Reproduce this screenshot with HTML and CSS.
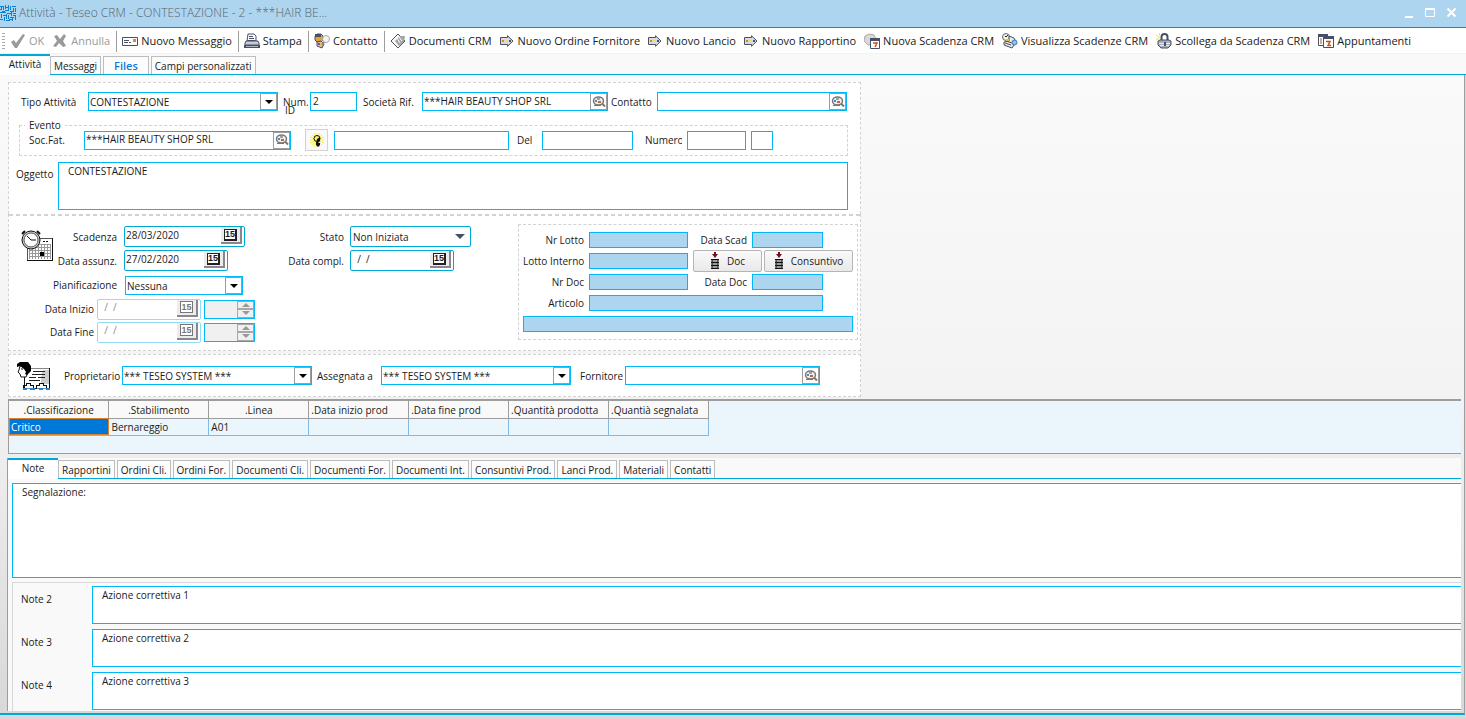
FILE: index.html
```html
<!DOCTYPE html>
<html lang="it">
<head>
<meta charset="utf-8">
<title>Attività - Teseo CRM</title>
<link rel="stylesheet" href="styles.css">
</head>
<body>
<svg class="defs" aria-hidden="true">
  <symbol id="i-ok" viewBox="0 0 16 16"><path d="M1 9l3-2 2 3 7-9 2 1-8 13H5z" fill="#9a9a9a"/></symbol>
  <symbol id="i-no" viewBox="0 0 16 16"><path d="M2 3l3-1 3 4 4-5 2 2-3 5 3 5-3 1-4-4-3 4-3-1 4-5z" fill="#9a9a9a"/></symbol>
  <symbol id="i-mail" viewBox="0 0 16 16"><path d="M.5 4.500h15v8H.5z" fill="#fff" stroke="#465066"/><path d="M2 7.500h5M2 9.500h4M7 9.500h2" stroke="#465066"/><path d="M11 6h3v3h-3z" fill="#e58a1c"/></symbol>
  <symbol id="i-print" viewBox="0 0 16 16"><path d="M4 1h6l2 2v5H3z" fill="#fff" stroke="#465066"/><path d="M5 3.500h4M5 5.500h5M4 7.500h7" stroke="#465066"/><path d="M2 8h12l1 2v2H1v-2z" fill="#c9ccd4" stroke="#465066"/><path d="M0 12h16v3H0z" fill="#465066"/><path d="M2 13.500h12" stroke="#aeb4c0"/></symbol>
  <symbol id="i-person" viewBox="0 0 16 16"><path d="M1 3l2-2h4l2 2v4l-2 2H3L1 7z" fill="#e9a23a" stroke="#465066"/><path d="M1 1h6v3H1z" fill="#465066"/><path d="M3 9l4-1 3 3-2 4-5-2z" fill="#e8c07a" stroke="#465066"/><circle cx="12" cy="6" r="3.500" fill="#f4f4f4" stroke="#aaa"/><path d="M10 9l-2 3" stroke="#888" stroke-width="2"/><path d="M4 10h2v2H4z" fill="#7d4fa8"/></symbol>
  <symbol id="i-doc" viewBox="0 0 16 16"><path d="M1 8l7-7 7 7-7 7z" fill="#f6f6f6" stroke="#555"/><path d="M5 8l5-5 5 0-1 6-5 4z" fill="#a5a5a5"/><path d="M7 5l3 5M9 4l3 4" stroke="#fff"/><path d="M2 9l6 6 7-7" fill="none" stroke="#555"/></symbol>
  <symbol id="i-arrow" viewBox="0 0 14 12"><path d="M.5 2.500h7V.7L13 6l-5.500 5.300V9.500h-7z" fill="#d9dbe0" stroke="#465066"/><path d="M2 5h2v2H2z" fill="#e5801c"/><path d="M5 5h3v2H5z" fill="#f4e43c"/><path d="M9 5h2v2H9z" fill="#465066"/></symbol>
  <symbol id="i-cal" viewBox="0 0 16 16"><path d="M1 3l4-2 5 1 2 4-2 5-6 1-4-4z" fill="#d9d9d9" stroke="#aaa"/><path d="M6.500 5.500h9v10h-9z" fill="#fff" stroke="#465066"/><path d="M6 5h10v3H6z" fill="#465066"/><path d="M9 10h4l-2 4" fill="none" stroke="#c5501c" stroke-width="1.500"/></symbol>
  <symbol id="i-view" viewBox="0 0 16 16"><circle cx="4" cy="4" r="3.500" fill="#f2f2f2" stroke="#666"/><path d="M3 3l1 1 2-2" fill="none" stroke="#222"/><path d="M7 3l5 2 2 4-4 6-8-3V9l5-1z" fill="#e8e8e8" stroke="#465066"/><path d="M3 10l6 2M4 8l6 2" stroke="#465066"/><circle cx="12.500" cy="9.500" r="2.500" fill="#8fc1ee" stroke="#3c78b8"/><path d="M4 6h3v2H4z" fill="#e8c33a"/></symbol>
  <symbol id="i-lock" viewBox="0 0 16 16"><path d="M5.500 8V4a3 3 0 0 1 6 0v4" fill="none" stroke="#465066" stroke-width="2"/><path d="M2 8l2-1h9l2 1v4l-3 3H5l-3-3z" fill="#a9aebb" stroke="#465066"/><path d="M3 10.500h11M4 12.500h9" stroke="#e6e8ee"/><path d="M8 9h2v4H8z" fill="#465066"/><path d="M0 2l4 3M0 6h3M3 0l1 3" stroke="#f1e03a"/></symbol>
  <symbol id="i-app" viewBox="0 0 16 16"><path d="M.5 1.500h9v11h-9z" fill="#fff" stroke="#465066"/><path d="M0 1h10v3H0z" fill="#465066"/><path d="M2 6h2M2 8h2M2 10h2" stroke="#c5501c"/><path d="M5.500 3.500h10v11h-10z" fill="#fff" stroke="#465066"/><path d="M5 3h11v3H5z" fill="#465066"/><path d="M8 8.500h4l-2 4h3" fill="none" stroke="#c5501c" stroke-width="1.500"/></symbol>
  <symbol id="i-look" viewBox="0 0 14 14"><ellipse cx="6.500" cy="6" rx="5" ry="4" fill="#eee" stroke="#777" stroke-width="1.500"/><path d="M2 10.500h7" stroke="#777"/><path d="M10 8.500l3 3" stroke="#777" stroke-width="2"/><path d="M3 5h2v2H3z" fill="#3a8fe0"/><path d="M6 6h3v2H6z" fill="#c5662c"/><path d="M5 4h3" stroke="#555"/></symbol>
  <symbol id="i-down" viewBox="0 0 8 4"><path d="M0 0h8L4 4z" fill="currentColor"/></symbol>
  <symbol id="i-stack" viewBox="0 0 10 18"><path d="M5 0v3" stroke="#7a0c1c" stroke-width="2"/><path d="M2 2h6L5 6z" fill="#7a0c1c"/><path d="M2 7.500h6v9H2z" fill="#999" stroke="#111"/><path d="M1 7.500h8M1 10.500h8M1 13.500h8M1 16.500h8" stroke="#111"/></symbol>
</svg>

<div class="window">
  <header class="titlebar">
    <svg class="app-icon" viewBox="0 0 16 16" shape-rendering="crispEdges" fill="none" stroke="#0a7fd6"><path d="M0 1.500h4M3.500 1v4M6 2.500h3M8.500 0v6M0 4.500h2M5 5.500h3M10.500 1v4M12 1.500h4M13.500 3v3M15.500 3v4M0 7.500h6M7 8.500h4M11.500 6v5M13 8.500h3M1.500 9v4M3 10.500h4M8.500 10v4M10 12.500h4M4.500 12v4M0 14.500h3M6 15.500h4M12.500 13v3M15.500 10v5M6.500 12v2M1.500 2v3M5.500 0v4M10 6.500h4M2 6.500h3M6.500 9v3M13 10.500h2M9 14.500h3"/></svg>
    <h1>Attività - Teseo CRM - CONTESTAZIONE - 2 - ***HAIR BE...</h1>
    <div class="win-buttons">
      <button type="button" aria-label="Riduci"><svg viewBox="0 0 12 12"><path d="M3 10h8" stroke="#fff" stroke-width="2"/></svg></button>
      <button type="button" aria-label="Ingrandisci"><svg viewBox="0 0 12 12" fill="none" stroke="#fff"><path d="M1.500 1.500h9v8h-9z"/><path d="M1 2h10" stroke-width="2"/></svg></button>
      <button type="button" aria-label="Chiudi"><svg viewBox="0 0 12 12"><path d="M1.500 1.500l8 8M9.500 1.500l-8 8" stroke="#fff" stroke-width="2"/></svg></button>
    </div>
  </header>

  <nav class="toolbar">
    <span class="grip"></span>
    <button type="button" disabled><svg><use href="#i-ok"/></svg>OK</button>
    <button type="button" disabled><svg><use href="#i-no"/></svg>Annulla</button>
    <span class="sep"></span>
    <button type="button"><svg><use href="#i-mail"/></svg>Nuovo Messaggio</button>
    <span class="sep"></span>
    <button type="button"><svg><use href="#i-print"/></svg>Stampa</button>
    <span class="sep"></span>
    <button type="button"><svg><use href="#i-person"/></svg>Contatto</button>
    <span class="sep"></span>
    <button type="button"><svg><use href="#i-doc"/></svg>Documenti CRM</button>
    <button type="button"><svg class="arrow"><use href="#i-arrow"/></svg>Nuovo Ordine Fornitore</button>
    <button type="button"><svg class="arrow"><use href="#i-arrow"/></svg>Nuovo Lancio</button>
    <button type="button"><svg class="arrow"><use href="#i-arrow"/></svg>Nuovo Rapportino</button>
    <button type="button"><svg><use href="#i-cal"/></svg>Nuova Scadenza CRM</button>
    <button type="button"><svg><use href="#i-view"/></svg>Visualizza Scadenze CRM</button>
    <button type="button"><svg><use href="#i-lock"/></svg>Scollega da Scadenza CRM</button>
    <button type="button"><svg><use href="#i-app"/></svg>Appuntamenti</button>
  </nav>

  <nav class="tabs main-tabs">
    <button type="button" class="tab active">Attività</button>
    <button type="button" class="tab">Messaggi</button>
    <button type="button" class="tab files">Files</button>
    <button type="button" class="tab">Campi personalizzati</button>
  </nav>

  <main class="page">
    <form class="form">
      <section class="block general">
        <div class="row">
          <label class="l-tipo" for="tipo">Tipo Attività</label>
          <div class="combo"><select id="tipo"><option>CONTESTAZIONE</option></select><span class="drop"><svg><use href="#i-down"/></svg></span></div>
          <label class="l-num" for="num">Num.<span class="id">ID</span></label>
          <input class="w47" id="num" value="2">
          <label class="l-soc" for="soc">Società Rif.</label>
          <div class="lookup w186"><input id="soc" value="***HAIR BEAUTY SHOP SRL"><button type="button" aria-label="Cerca società"><svg><use href="#i-look"/></svg></button></div>
          <label class="l-con" for="con">Contatto</label>
          <div class="lookup w190"><input id="con"><button type="button" aria-label="Cerca contatto"><svg><use href="#i-look"/></svg></button></div>
        </div>
        <fieldset class="evento">
          <legend>Evento</legend>
          <div class="evento-row">
            <label class="l-fat" for="fat">Soc.Fat.</label>
            <div class="lookup w207"><input id="fat" value="***HAIR BEAUTY SHOP SRL"><button type="button" aria-label="Cerca fatturazione"><svg><use href="#i-look"/></svg></button></div>
            <button type="button" class="bulb" aria-label="Suggerimento"><svg viewBox="0 0 16 16"><path d="M8 1v14M1 8h14M3 3l10 10M13 3L3 13M5 1l6 14M1 5l14 6M11 1L5 15M15 5L1 11" stroke="#f5ee3c"/><circle cx="8" cy="6.500" r="3" fill="#fff45a" stroke="#111"/><path d="M8 7l3-2v4l-2 2H7z" fill="#111"/><path d="M7 11h4v2l-2 2-2-2z" fill="#111"/></svg></button>
            <input class="w175" aria-label="Evento">
            <label class="l-del" for="del">Del</label>
            <input class="w91" id="del">
            <label class="l-numero" for="numero"><span>Numero</span></label>
            <input class="w59" id="numero">
            <input class="w22" aria-label="Serie">
          </div>
        </fieldset>
        <div class="oggetto">
          <label for="ogg">Oggetto</label>
          <textarea id="ogg">CONTESTAZIONE</textarea>
        </div>
      </section>

      <section class="block planning">
        <svg class="clock" viewBox="0 0 32 32" shape-rendering="crispEdges"><path d="M6.500 8.500h25v22h-25z" fill="#fff" stroke="#555"/><path d="M8 14.500h22M8 17.500h22M8 20.500h22M8 23.500h22M8 26.500h22M8.500 14v15M11.500 14v15M14.500 14v15M17.500 14v15M20.500 14v15M23.500 14v15M26.500 14v15M29.500 14v15" stroke="#999"/><path d="M6 30.500h26M31.500 8v23" stroke="#111"/><path d="M19 22h4v4h-4z" fill="#000"/><path d="M22 11.500h6" stroke="#111" stroke-dasharray="2 1"/><g shape-rendering="auto"><circle cx="10" cy="10" r="9" fill="#ccc" stroke="#111"/><circle cx="10" cy="10" r="7" fill="#fff" stroke="#555"/><path d="M6 6l4 4h5" fill="none" stroke="#111"/><path d="M1 4l3-3M16 1l3 3" stroke="#111" stroke-width="2"/></g></svg>

        <div class="plan-left">
          <label for="scad">Scadenza</label>
          <div class="date wide"><input id="scad" value="28/03/2020"><button type="button" aria-label="Calendario"><span>15</span></button></div>
          <label for="ass">Data assunz.</label>
          <div class="date"><input id="ass" value="27/02/2020"><button type="button" aria-label="Calendario"><span>15</span></button></div>
          <label for="pian">Pianificazione</label>
          <div class="combo w118"><select id="pian"><option>Nessuna</option></select><span class="drop"><svg><use href="#i-down"/></svg></span></div>
          <div class="off-row">
            <label for="din">Data Inizio</label>
            <div class="date off"><input id="din" value="  /  /" disabled><button type="button" disabled aria-label="Calendario"><span>15</span></button></div>
            <div class="spin"><input aria-label="Ora inizio" disabled><span class="arrows"><button type="button" disabled aria-label="Su"><svg class="up"><use href="#i-down"/></svg></button><button type="button" disabled aria-label="Giù"><svg><use href="#i-down"/></svg></button></span></div>
          </div>
          <div class="off-row">
            <label for="dfi">Data Fine</label>
            <div class="date off"><input id="dfi" value="  /  /" disabled><button type="button" disabled aria-label="Calendario"><span>15</span></button></div>
            <div class="spin"><input aria-label="Ora fine" disabled><span class="arrows"><button type="button" disabled aria-label="Su"><svg class="up"><use href="#i-down"/></svg></button><button type="button" disabled aria-label="Giù"><svg><use href="#i-down"/></svg></button></span></div>
          </div>
        </div>

        <div class="plan-mid">
          <label for="stato">Stato</label>
          <div class="combo flat"><select id="stato"><option>Non Iniziata</option></select><span class="drop"><svg><use href="#i-down"/></svg></span></div>
          <label for="compl">Data compl.</label>
          <div class="date"><input id="compl" value="  /  /"><button type="button" aria-label="Calendario"><span>15</span></button></div>
        </div>

        <div class="lotto">
          <label class="first" for="nl">Nr Lotto</label><input id="nl" readonly>
          <label for="ds">Data Scad</label><input id="ds" readonly>
          <label class="first" for="li">Lotto Interno</label><input id="li" readonly>
          <div class="lotto-buttons">
            <button type="button"><svg><use href="#i-stack"/></svg>Doc</button>
            <button type="button" class="wide"><svg><use href="#i-stack"/></svg>Consuntivo</button>
          </div>
          <label class="first" for="nd">Nr Doc</label><input id="nd" readonly>
          <label for="dd">Data Doc</label><input id="dd" readonly>
          <label class="first" for="art">Articolo</label><input id="art" class="long" readonly>
          <input class="full" aria-label="Descrizione articolo" readonly>
        </div>
      </section>

      <section class="block owner">
        <svg class="card" viewBox="0 0 34 28" shape-rendering="crispEdges"><path d="M7.500 6.500h25v20h-25z" fill="#fff" stroke="#888"/><path d="M26 8h6v14h-8v-6z" fill="#ccc"/><path d="M32.500 6v21M7.500 14v12" stroke="#111"/><path d="M16 9.500h12M15 12.500h13M12 15.500h7M21 15.500h7M12 18.500h11" stroke="#222"/><path d="M6 26v-3h3v-2h4v2h3v3h3v-3h3v-2h4v2h3v3h4" fill="none" stroke="#111"/><path d="M6 26.500h4M13 26.500h5M22 26.500h4M29 26.500h4" stroke="#1c86e0" stroke-width="2"/><g shape-rendering="auto"><path d="M3 4h6l3 4-3 7H4l-1-3-2-2 1-2z" fill="#fff" stroke="#111"/><path d="M0 2l3-2h8l3 4v5l-4 4-2-1 1-2-2-3-4-3-3 1z" fill="#000"/><path d="M4 7h2" stroke="#111"/></g></svg>
        <label class="l-prop" for="prop">Proprietario</label>
        <div class="combo"><select id="prop"><option>*** TESEO SYSTEM ***</option></select><span class="drop"><svg><use href="#i-down"/></svg></span></div>
        <label class="l-asseg" for="asseg">Assegnata a</label>
        <div class="combo"><select id="asseg"><option>*** TESEO SYSTEM ***</option></select><span class="drop"><svg><use href="#i-down"/></svg></span></div>
        <label class="l-forn" for="forn">Fornitore</label>
        <div class="lookup w195"><input id="forn"><button type="button" aria-label="Cerca fornitore"><svg><use href="#i-look"/></svg></button></div>
      </section>
    </form>

    <div class="grid-box">
      <table>
        <thead><tr><th>.Classificazione</th><th>.Stabilimento</th><th>.Linea</th><th class="start">.Data inizio prod</th><th class="start">.Data fine prod</th><th class="start">.Quantità prodotta</th><th class="start">.Quantià segnalata</th></tr></thead>
        <tbody><tr><td class="selected">Critico</td><td>Bernareggio</td><td>A01</td><td></td><td></td><td></td><td></td></tr></tbody>
      </table>
    </div>

    <div class="details">
      <nav class="tabs">
        <button type="button" class="tab active">Note</button>
        <button type="button" class="tab">Rapportini</button>
        <button type="button" class="tab">Ordini Cli.</button>
        <button type="button" class="tab">Ordini For.</button>
        <button type="button" class="tab">Documenti Cli.</button>
        <button type="button" class="tab">Documenti For.</button>
        <button type="button" class="tab">Documenti Int.</button>
        <button type="button" class="tab">Consuntivi Prod.</button>
        <button type="button" class="tab">Lanci Prod.</button>
        <button type="button" class="tab">Materiali</button>
        <button type="button" class="tab">Contatti</button>
      </nav>
      <div class="notes">
        <textarea class="main-note" aria-label="Note">Segnalazione:</textarea>
        <div class="note-list">
          <label for="n2">Note 2</label><textarea id="n2">Azione correttiva 1</textarea>
          <label for="n3">Note 3</label><textarea id="n3">Azione correttiva 2</textarea>
          <label for="n4">Note 4</label><textarea id="n4">Azione correttiva 3</textarea>
        </div>
      </div>
    </div>
  </main>
</div>
</body>
</html>
```

FILE: styles.css
```css
:root {
  --cyan: #00b7f8;
  --line: #00a8d8;
  --sky: #aed5ef;
  --gray: #9d9d9d;
  --ink: #1a1a1a;
}

* { box-sizing: border-box; }

body {
  margin: 0;
  background: #d8d8d8;
  color: var(--ink);
  font: 10px/14px "Open Sans", "Noto Sans", sans-serif;
}

button, input, select, textarea {
  margin: 0;
  border-radius: 0;
  color: inherit;
  font: inherit;
}

button { padding: 0; border: 0; background: none; }
.defs { position: absolute; width: 0; height: 0; }

.window { display: flex; flex-direction: column; min-height: 100vh; }

/* Title bar */
.titlebar {
  display: flex;
  align-items: center;
  height: 28px;
  padding-bottom: 2px;
  border-bottom: 1px solid #5f7485;
  background: var(--sky);
}
.app-icon { width: 16px; height: 16px; }
.titlebar h1 {
  flex: 1;
  margin: 0;
  padding-left: 3px;
  color: #5c646c;
  font-size: 12px;
  font-weight: 300;
}
.win-buttons { display: flex; gap: 10px; padding-right: 8px; }
.win-buttons button { width: 12px; height: 12px; }
.win-buttons svg { display: block; width: 12px; height: 12px; }

/* Toolbar */
.toolbar {
  display: flex;
  align-items: center;
  height: 26px;
  padding: 1px 0 0 2px;
  border-bottom: 1px solid #f1f1f1;
  background: #fff;
  font-size: 11px;
}
.toolbar button {
  display: flex;
  align-items: center;
  gap: 3px;
  padding: 0 4px;
  white-space: nowrap;
}
.toolbar button:disabled { color: #9a9a9a; }
.toolbar svg { width: 16px; height: 16px; }
.toolbar svg.arrow { width: 14px; height: 12px; margin-right: 1px; }
.grip { width: 3px; height: 16px; margin-right: 1px; background: repeating-linear-gradient(#aaa 0 1px, #fff 1px 3px); }
.sep { width: 1px; height: 21px; margin: 0 1px 0 2px; background: var(--gray); }

/* Tabs */
.tabs { display: flex; align-items: flex-end; gap: 2px; height: 21px; border-bottom: 1px solid var(--line); background: #f9f9f9; }
.tab { height: 18px; padding: 0 3px; border: 1px solid #bdbdbd; border-bottom: 0; background: #fcfcfc; }
.tabs .active {
  width: 50px;
  height: 21px;
  margin: 0 -2px -1px 0;
  padding-bottom: 3px;
  border: 0;
  border-top: 2px solid var(--line);
  background: #fff;
}
.main-tabs .files { padding: 0 10px; color: #0a7bdc; font-size: 11px; font-weight: 600; }

/* Page */
.page {
  flex: 1;
  margin: 0 1px 4px 0;
  padding: 7px 3px 1px 8px;
  border-right: 1px solid var(--gray);
  border-bottom: 2px solid var(--line);
  background: linear-gradient(#fafafa, #f3f3f3 50%, #d8d8d8);
}
.form { width: 853px; }
.block { border: 1px dashed #d2d2d2; background: #fff; }
.row, .evento-row, .owner { display: flex; align-items: center; }

input, textarea, .combo, .lookup, .date {
  border: 1px solid var(--cyan);
  background: #fff;
  outline: 0;
}
input { height: 19px; padding: 0 2px 2px; min-width: 0; }
textarea { display: block; padding: 1px 9px; resize: none; overflow: hidden; }

.combo, .lookup, .date { display: flex; height: 19px; }
.combo { position: relative; width: 190px; }
.combo select { width: 100%; padding: 0 20px 0 1px; border: 0; background: none; appearance: none; outline: 0; }
.drop {
  position: absolute;
  top: 0;
  right: 0;
  display: grid;
  place-items: center;
  width: 17px;
  height: 17px;
  border: 1px solid var(--gray);
  background: #fff;
  color: #000;
  pointer-events: none;
}
.drop svg { width: 8px; height: 4px; }
.combo.flat { width: 121px; height: 21px; border-color: var(--line); border-radius: 2px; }
.combo.flat select { padding-left: 2px; }
.combo.flat .drop { right: 2px; height: 19px; border: 0; color: #465066; }
.combo.flat .drop svg { width: 10px; height: 5px; }

.lookup input, .date input { flex: 1; width: 0; height: 17px; padding-left: 1px; border: 0; background: none; }
.lookup button { display: grid; place-items: center; width: 17px; height: 17px; border: 1px solid var(--gray); background: #fff; }
.lookup svg { width: 14px; height: 14px; }

.date { width: 104px; height: 21px; border-color: var(--line); border-radius: 2px; }
.date.wide { width: 121px; }
.date input { white-space: pre; }
.date button {
  display: grid;
  place-items: center;
  width: 21px;
  height: 17px;
  margin-right: 2px;
  border-right: 2px solid #8b8790;
  border-bottom: 2px solid #8b8790;
  background: #ececec;
}
.date button span {
  width: 13px;
  height: 12px;
  border: 1px solid #222;
  border-width: 1px 2px 2px 1px;
  background: #fff;
  font: 700 9px/9px "Liberation Sans", sans-serif;
}
.date.off { border-color: #93dcf2; color: #8a8a8a; }
.date.off button { color: #777; }
.date.off button span { border-color: #777; border-width: 1px; line-height: 10px; }

.w22 { width: 22px; }
.w47 { width: 47px; }
.w59 { width: 59px; }
.w91 { width: 91px; }
.combo.w118 { width: 118px; }
.w175 { width: 175px; }
.w186 { width: 186px; }
.w190 { width: 190px; }
.w195 { width: 195px; }
.w207 { width: 207px; }

/* General block */
.general { height: 132px; padding: 9px 12px 3px 7px; border-bottom: 0; }
.row { padding-left: 5px; }
.l-tipo { width: 67px; }
.l-num { position: relative; width: 32px; padding-left: 5px; }
.l-num .id { position: absolute; top: 9px; left: 7px; line-height: 12px; }
.l-soc { width: 65px; padding-left: 6px; }
.l-con { width: 49px; padding-left: 3px; }

.evento { height: 36px; margin: 9px 0 0 3px; padding: 0; border: 1px dashed #d2d2d2; }
.evento legend { margin-left: 5px; padding: 0 4px; line-height: 11px; }
.evento-row { margin-top: -2px; }
.l-fat { width: 64px; padding-left: 9px; }
.bulb { width: 23px; height: 22px; margin: 0 6px 0 14px; border: 1px solid #d2d2d2; background: #f9f9f9; }
.bulb svg { display: block; width: 16px; height: 16px; margin: 0 auto; }
.l-del { width: 33px; padding-left: 8px; }
.l-numero { width: 54px; padding-left: 12px; }
.l-numero span { display: block; width: 37px; overflow: hidden; }
.evento-row .w59 { margin-right: 5px; }

.oggetto { display: flex; margin-top: 6px; }
.oggetto label { width: 42px; padding-top: 5px; }
.oggetto textarea { flex: 1; height: 48px; }

/* Planning block */
.planning {
  display: flex;
  align-items: flex-start;
  height: 137px;
  padding: 10px 2px 0 12px;
  border-top: 0;
  background: repeating-linear-gradient(90deg, #d2d2d2 0 4px, #fff 4px 7px) 0 0 / 100% 2px no-repeat #fff;
}
.clock { width: 32px; height: 32px; margin-top: 6px; }
.plan-left {
  display: grid;
  grid-template-columns: 64px auto;
  gap: 3px 7px;
  align-items: center;
  width: 203px;
  padding-top: 2px;
}
.plan-left > label, .plan-mid label, .lotto label { text-align: right; white-space: nowrap; }
.plan-left .w118 { margin: 2px 0 1px 1px; }
.off-row { display: flex; grid-column: 1 / -1; gap: 3px; align-items: center; height: 20px; }
.off-row label { display: flex; justify-content: flex-end; width: 41px; white-space: nowrap; }
.off-row .date { flex: none; }
.spin { display: flex; flex: none; width: 51px; height: 19px; border: 1px solid var(--cyan); }
.spin input { flex: 1; width: 0; height: 17px; border: 0; background: #f0f0f0; }
.arrows { display: grid; width: 17px; }
.arrows button { display: grid; place-items: center; border: 1px solid #a8a8a8; background: #f0f0f0; color: #999; }
.arrows svg { width: 8px; height: 4px; }
.arrows .up { transform: rotate(180deg); }
.plan-mid { display: grid; grid-template-columns: 74px auto; gap: 3px 6px; align-items: center; margin-left: 14px; padding-top: 2px; }
.lotto {
  display: grid;
  grid-template-columns: 61px 99px 54px 71px 25px;
  grid-auto-rows: 16px;
  gap: 5px;
  align-items: center;
  margin-left: auto;
  padding: 7px 4px;
  border: 1px dashed #d2d2d2;
}
.lotto input { width: 100%; height: 16px; background: var(--sky); }
.lotto .first { grid-column: 1; }
.lotto .long { grid-column: 2 / 5; }
.lotto .full { grid-column: 1 / 6; }
.lotto-buttons { display: flex; gap: 2px; grid-column: 3 / 6; }
.lotto-buttons button {
  display: flex;
  flex: 0 1 70px;
  justify-content: center;
  align-items: center;
  gap: 7px;
  height: 22px;
  border: 1px solid #b5b5b5;
  border-radius: 2px;
  background: linear-gradient(#fafafa, #e9e9e9);
}
.lotto-buttons .wide { flex-basis: 90px; }
.lotto-buttons svg { width: 10px; height: 18px; }

/* Owner block */
.owner { height: 43px; margin-top: 3px; padding-left: 8px; }
.card { width: 34px; height: 28px; }
.l-prop { width: 71px; padding-left: 13px; }
.l-asseg { width: 69px; padding-left: 5px; }
.l-forn { width: 54px; padding-left: 9px; }

/* Product grid */
.grid-box { height: 55px; margin-top: 2px; border: 1px solid var(--gray); border-width: 2px 0 1px 1px; background: #eaf5fc; }
table { width: 700px; border-collapse: collapse; table-layout: fixed; }
th { height: 17px; padding: 1px 2px 0; border-right: 1px solid var(--gray); border-bottom: 1px solid var(--gray); background: #f9f9f9; font-weight: 400; white-space: nowrap; }
th.start { text-align: left; }
td { height: 17px; padding: 0 2px; border-right: 1px solid #7ebbe8; border-bottom: 1px solid #7ebbe8; }
td.selected { outline: 1px solid #d9822b; outline-offset: -1px; background: #0078d7; color: #fff; }

/* Details */
.details { margin: 4px 0 0 -1px; border-left: 1px solid var(--gray); background: #f9f9f9; }
.notes { padding: 4px 0 0 4px; }
.main-note { width: 100%; height: 95px; border-right: 0; }
.note-list {
  display: grid;
  grid-template-columns: 79px 1fr;
  row-gap: 5px;
  align-items: start;
  margin-top: 4px;
  padding: 3px 0 1px;
  border: 1px solid #d8d8d8;
  border-width: 1px 0 0 1px;
}
.note-list label { padding: 6px 0 0 8px; }
.note-list textarea { width: 100%; height: 38px; border-right: 0; }
```
